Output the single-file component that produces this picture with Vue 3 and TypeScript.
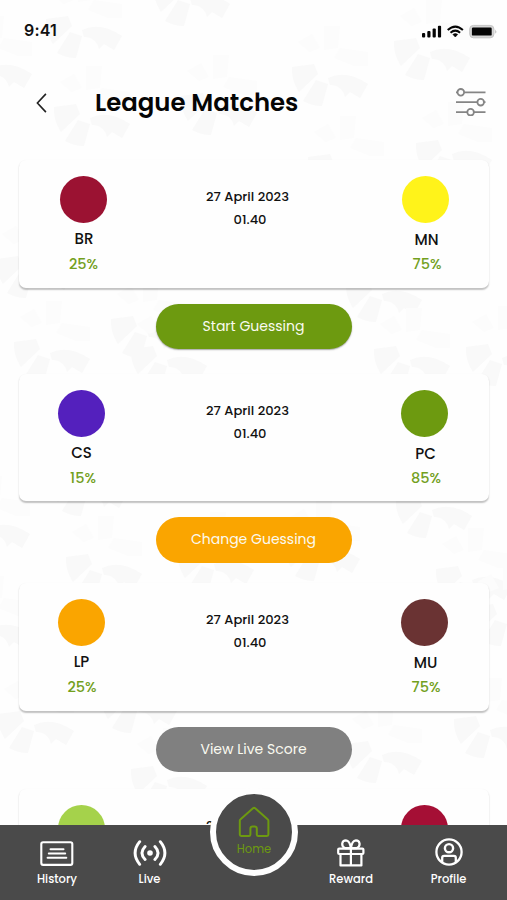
<script setup lang="ts">
interface Team {
  name?: string
  share?: string
  color: string
}

interface Match {
  home: Team
  away: Team
  date: string
  time?: string
  action?: string
  kind: 'start' | 'change' | 'live' | 'next'
}

const matches: Match[] = [
  {
    home: { name: 'BR', share: '25%', color: '#9b1232' },
    away: { name: 'MN', share: '75%', color: '#fff31a' },
    date: '27 April 2023', time: '01.40', action: 'Start Guessing', kind: 'start',
  },
  {
    home: { name: 'CS', share: '15%', color: '#5420bd' },
    away: { name: 'PC', share: '85%', color: '#6d9a10' },
    date: '27 April 2023', time: '01.40', action: 'Change Guessing', kind: 'change',
  },
  {
    home: { name: 'LP', share: '25%', color: '#faa500' },
    away: { name: 'MU', share: '75%', color: '#6a3333' },
    date: '27 April 2023', time: '01.40', action: 'View Live Score', kind: 'live',
  },
  {
    home: { color: '#a5d24b' },
    away: { color: '#a50f35' },
    date: '27 April 2023', kind: 'next',
  },
]

const flowers: [number, number][] = [
  [80, 22], [188, -10], [326, 70], [428, 44], [215, 99], [88, 110], [342, 160], [450, 146],
  [380, 286], [30, 262], [145, 322], [500, 350], [48, 345], [165, 352], [408, 352], [-10, 60],
  [85, 480], [212, 556], [430, 502], [-12, 520], [318, 545], [470, 572], [100, 560],
  [32, 717], [135, 697], [380, 747], [488, 722], [165, 772], [-10, 620], [505, 610],
]
</script>

<template>
  <main class="screen">
    <svg class="pattern" viewBox="0 0 507 900" aria-hidden="true">
      <g v-for="([x, y], i) in flowers" :key="i" :transform="`translate(${x} ${y})`">
        <path d="M-34-3-12-6-8 4-27 22Q-35 10-34-3ZM-10 10 2 14-4 36Q-14 36-23 31ZM2 8Q20-1 42 14L34 28 24 22 19 27Q16 15 4 15Z" />
        <path class="faint" d="M8-12 28-4H42V-18L14-22ZM-2-20V-44H14L12-22ZM-28-28-14-36-6-22-16-18Z" />
      </g>
    </svg>

    <div class="status">
      <span class="clock">9:41</span>
      <svg class="indicators" viewBox="0 0 76 16" aria-hidden="true">
        <g fill="#050505">
          <rect x="0" y="9" width="3.2" height="4.6" rx="1" />
          <rect x="5.3" y="7" width="3.2" height="6.6" rx="1" />
          <rect x="10.6" y="4.6" width="3.2" height="9" rx="1" />
          <rect x="15.9" y="1.8" width="3.2" height="11.8" rx="1" />
          <path d="M30.9 10.4Q33.3 8.8 35.7 10.4L33.3 13Z" stroke="#050505" stroke-width=".6" stroke-linejoin="round" />
        </g>
        <path d="M25.7 6.1Q33.3-.9 40.9 6.1M28.5 8.8Q33.3 4.5 38.1 8.8" fill="none" stroke="#050505" stroke-width="2" />
        <rect x="47.7" y="1.4" width="24.2" height="12.4" rx="3.7" fill="#d6d6d6" stroke="#c4c4c4" stroke-width="1" />
        <rect x="49.9" y="3.6" width="19.8" height="8" rx="1.2" fill="#050505" />
        <path d="M73.4 5.4q1.8 2.2 0 4.4z" fill="#aaa" />
      </svg>
    </div>

    <header class="header">
      <svg class="back" viewBox="0 0 12 20" aria-hidden="true"><path d="M9.9.9 1.4 10l8.5 9.1" /></svg>
      <h1>League Matches</h1>
      <svg class="filter" viewBox="0 0 30 28" aria-hidden="true">
        <path d="M0 4.3H1.4M8.2 4.3H29.5M0 14.2H21.3M28.1 14.2H29.5M0 24.2H11.2M18 24.2H29.5" />
        <circle cx="4.8" cy="4.3" r="3.3" /><circle cx="24.7" cy="14.2" r="3.3" /><circle cx="14.6" cy="24.2" r="3.3" />
      </svg>
    </header>

    <section v-for="(m, i) in matches" :key="i" class="match" :class="`match-${m.kind}`">
      <article class="card">
        <div class="team home">
          <i class="badge" :style="{ background: m.home.color }"></i>
          <b v-if="m.home.name">{{ m.home.name }}</b>
          <span v-if="m.home.share">{{ m.home.share }}</span>
        </div>
        <div class="when">
          <span class="date">{{ m.date }}</span>
          <span v-if="m.time" class="time">{{ m.time }}</span>
        </div>
        <div class="team away">
          <i class="badge" :style="{ background: m.away.color }"></i>
          <b v-if="m.away.name">{{ m.away.name }}</b>
          <span v-if="m.away.share">{{ m.away.share }}</span>
        </div>
      </article>
      <button v-if="m.action" class="action" :class="m.kind" type="button">{{ m.action }}</button>
    </section>

    <nav class="tabs">
      <a class="tab history">
        <svg viewBox="0 0 34 26">
          <rect x="1.3" y="1.3" width="31" height="22.6" rx="1.8" stroke-width="2.1" />
          <path d="M10.5 8.3H23.5M8.8 12.4H25.2M7.6 16.8H26.3" stroke-width="2" stroke-linecap="round" />
        </svg>
        <span>History</span>
      </a>
      <a class="tab broadcast">
        <svg viewBox="0 0 34 26">
          <path d="M6.7 1.7Q-2.5 13 6.7 24.3M27.3 1.7Q36.5 13 27.3 24.3M12.1 6.5Q5.8 13 12.1 19.5M21.9 6.5Q28.2 13 21.9 19.5" stroke-width="2.9" stroke-linecap="round" />
          <circle cx="17" cy="13" r="2.8" class="solid" />
        </svg>
        <span>Live</span>
      </a>
      <a class="tab reward">
        <svg viewBox="0 0 28 28">
          <rect x="1.2" y="9.6" width="25.2" height="5.4" rx="1" stroke-width="2.2" />
          <path d="M3.5 15.3V26.4H24.4V15.3M13.9 9.4V26.4M13.9 9.2H8.3Q4.9 7.8 5.2 4.6 5.8 1.3 8.9 1.3 12.9 1.6 13.9 9.2ZM13.9 9.2H19.5Q22.9 7.8 22.6 4.6 22 1.3 18.9 1.3 14.9 1.6 13.9 9.2Z" stroke-width="2.2" stroke-linejoin="round" />
        </svg>
        <span>Reward</span>
      </a>
      <a class="tab profile">
        <svg viewBox="0 0 28 28">
          <circle cx="14" cy="14" r="12.6" stroke-width="2.3" />
          <circle cx="14" cy="10.2" r="4.1" stroke-width="2.4" />
          <path d="M7.2 24.2V19.8Q7.2 17.9 9.1 17.9H18.9Q20.8 17.9 20.8 19.8V24.2" stroke-width="2.3" />
        </svg>
        <span>Profile</span>
      </a>
      <a class="home-tab">
        <svg viewBox="0 0 32 32"><path d="M2.6 13.2Q1.8 13.8 1.8 14.8V28.6Q1.8 30 3.2 30H11.2Q12.4 30 12.4 28.6V22.6Q12.4 20.4 14.6 20.4H16.6Q18.8 20.4 18.8 22.6V28.6Q18.8 30 20 30H29Q30.4 30 30.4 28.6V14.8Q30.4 13.8 29.6 13.2L17.2 2.3Q16.1 1.4 15 2.3Z" /></svg>
        <span>Home</span>
      </a>
    </nav>
  </main>
</template>

<style>
body {
  margin: 0;
  background: #fefefe;
}
</style>

<style scoped>
.screen {
  position: relative;
  width: 507px;
  height: 900px;
  overflow: hidden;
  background: #fefefe;
  color: #111;
  font-family: Poppins, Inter, sans-serif;
}

.pattern {
  position: absolute;
  inset: 0;
  width: 507px;
  height: 900px;
  fill: #f9f9f9;
}

.pattern .faint {
  fill: #fcfcfc;
}

.status {
  position: relative;
  display: flex;
  justify-content: space-between;
  height: 61px;
  padding: 0 9px 0 24px;
  box-sizing: border-box;
}

.clock {
  padding-top: 20px;
  font: 600 16px/20px Inter, sans-serif;
  letter-spacing: .2px;
}

.indicators {
  width: 76px;
  height: 16px;
  margin-top: 24px;
}

.header {
  position: relative;
  display: flex;
  align-items: center;
  height: 84px;
  padding: 0 21px 0 36px;
}

.back {
  width: 12px;
  height: 20px;
  fill: none;
  stroke: #222;
  stroke-width: 1.6;
}

h1 {
  flex: 1;
  margin: 0 0 0 47px;
  font-size: 24.4px;
  line-height: 36px;
  font-weight: 600;
  color: #050505;
}

.filter {
  width: 30px;
  height: 28px;
  margin-top: -2px;
  fill: none;
  stroke: #858585;
  stroke-width: 1.8;
}

.match {
  position: relative;
  display: flex;
  flex-direction: column;
  align-items: center;
  height: 206px;
}

.header + .match {
  margin-top: 15px;
}

.match-start {
  height: 213.5px;
}

.match-change {
  height: 209.5px;
}

.card {
  display: flex;
  justify-content: space-between;
  width: 470px;
  height: 127.5px;
  flex: none;
  padding: 15.5px 41px 0 39.5px;
  box-sizing: border-box;
  border-radius: 7px;
  background: #fefefe;
  box-shadow: 0 1.5px 1.5px rgba(0, 0, 0, .24);
}

.match-start .card {
  padding: 15.5px 40px 0 41px;
}

.match-change .card {
  padding-top: 16px;
}

.team {
  display: flex;
  flex-direction: column;
  align-items: center;
  width: 47px;
}

.badge {
  width: 47px;
  height: 47px;
  flex: none;
  border-radius: 50%;
}

.team b {
  margin-top: 4px;
  font-size: 15px;
  line-height: 24px;
  font-weight: 500;
}

.match-start .home b {
  padding-left: 2px;
}

.away b {
  margin: 5px 0 -1px 3px;
}

.team span {
  margin-top: 1px;
  padding-left: 1px;
  font-size: 14.5px;
  line-height: 24px;
  font-weight: 500;
  color: #73a01d;
}

.away span {
  padding-left: 4px;
}

.match-change .home span {
  padding-left: 3px;
}

.when {
  display: flex;
  flex-direction: column;
  align-items: center;
  padding-top: 10.5px;
  margin-right: 10.5px;
  font-size: 13.1px;
  line-height: 22.5px;
  font-weight: 500;
  white-space: nowrap;
}

.match-start .when {
  margin-right: 13px;
}

.time {
  padding-left: 5px;
}

.action {
  width: 196px;
  height: 45.5px;
  flex: none;
  margin: 16px 0 0;
  padding: 0;
  border: 0;
  border-radius: 23px;
  color: #fafaf0;
  font: 400 14px/45px Poppins, Inter, sans-serif;
}

.start {
  background: #6d9a10;
  box-shadow: 0 1px 1.5px rgba(0, 0, 0, .35);
}

.change {
  background: #faa500;
}

.live {
  background: #808080;
}

.tabs {
  position: absolute;
  left: 0;
  bottom: 0;
  display: flex;
  width: 507px;
  height: 75px;
  background: #4a4a4a;
  color: #fff;
}

.tab {
  display: flex;
  flex-direction: column;
  align-items: center;
  width: 94px;
  font-size: 11.5px;
  line-height: 18px;
  font-weight: 500;
}

.tab svg {
  width: 34px;
  height: 26px;
  margin-top: 16px;
  fill: none;
  stroke: #fff;
}

.tab .solid {
  fill: #fff;
  stroke: none;
}

.history {
  margin-left: 10px;
}

.history span {
  margin-top: 2.5px;
}

.broadcast {
  margin-left: -1.5px;
}

.tab.broadcast svg {
  margin-top: 15px;
}

.broadcast span {
  margin-top: 4px;
}

.reward {
  margin-left: 107.5px;
}

.tab.reward svg,
.tab.profile svg {
  width: 28px;
  height: 28px;
  margin-top: 13.5px;
}

.reward span {
  margin-top: 3.4px;
}

.profile {
  margin-left: 3.5px;
}

.tab.profile svg {
  margin-top: 13px;
}

.profile span {
  margin-top: 3.5px;
}

.home-tab {
  position: absolute;
  left: 210px;
  top: -37px;
  display: flex;
  flex-direction: column;
  align-items: center;
  width: 76px;
  height: 76px;
  border: 6px solid #fefefe;
  border-radius: 50%;
  background: #4a4a4a;
  color: #6d9a10;
  font-size: 11.5px;
  line-height: 18px;
  font-weight: 400;
}

.home-tab svg {
  width: 32px;
  height: 32px;
  margin: 12px 0 1.5px;
  fill: none;
  stroke: #6d9a10;
  stroke-width: 2;
  stroke-linejoin: round;
}
</style>
